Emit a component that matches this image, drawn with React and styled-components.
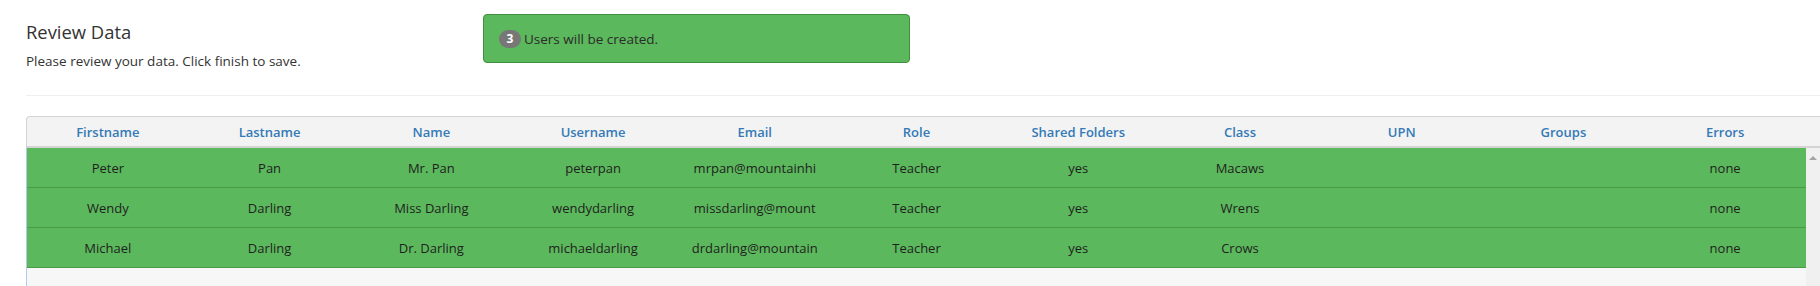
import React from "react";
import styled, { createGlobalStyle } from "styled-components";

const GlobalStyle = createGlobalStyle`
body{
  margin:0;
  background:#fff;
  font-family:"Open Sans", "Noto Sans", sans-serif;
  color:#333;
}
`

const Page = styled.div`
width:1820px;
height:286px;
overflow:hidden;
padding-left:26px;
box-sizing:border-box;
`

const TopSection = styled.div`
display:flex;
align-items:flex-start;
`

const Intro = styled.div`
width:457px;
padding-top:21px;
`

const Title = styled.h3`
margin:0;
font-size:18.4px;
line-height:22px;
font-weight:400;
color:#333;
`

const Subtitle = styled.p`
margin:9px 0 0;
font-size:13.5px;
line-height:18px;
color:#333;
`

const Alert = styled.div`
margin-top:14px;
width:427px;
height:49px;
box-sizing:border-box;
display:flex;
align-items:center;
gap:3px;
padding:0 15px;
background:#5cb85c;
border:1px solid #3f8f3f;
border-radius:4px;
font-size:13.5px;
color:#2b2b2b;
`

const Badge = styled.span`
display:inline-flex;
align-items:center;
justify-content:center;
min-width:22px;
height:18px;
border-radius:9px;
background:#777;
color:#fff;
font-size:12px;
font-weight:700;
`

const Divider = styled.hr`
margin:25px 0 20px;
border:0;
border-top:1px solid #eee;
`

const Grid = styled.div`
display:flex;
flex-direction:column;
`

const HeaderRow = styled.div`
display:grid;
grid-template-columns:repeat(11, 1fr) 14px;
height:32px;
box-sizing:border-box;
background:#f3f3f3;
border:1px solid #d4d4d4;
border-bottom:2px solid #d4d4d4;
border-right:0;
border-top-left-radius:4px;
`

const HeaderCell = styled.div`
display:flex;
align-items:center;
justify-content:center;
font-size:13px;
font-weight:600;
color:#337ab7;
`

const Viewport = styled.div`
display:flex;
height:150px;
`

const Body = styled.div`
flex:1;
background:#f7f7f7;
border-left:1px solid #b3cae6;
`

const Row = styled.div`
display:grid;
grid-template-columns:repeat(11, 1fr);
height:40px;
box-sizing:border-box;
background:#5cb85c;
border-bottom:1px solid #4a9a4a;
`

const Cell = styled.div`
display:flex;
align-items:center;
justify-content:center;
overflow:hidden;
white-space:nowrap;
font-size:13px;
color:#1f1f1f;
`

const Scrollbar = styled.div`
width:14px;
background:#f0f0f0;
display:flex;
justify-content:center;
padding-top:8px;
box-sizing:border-box;
`

const ArrowUp = styled.div`
width:0;
height:0;
border-left:4px solid transparent;
border-right:4px solid transparent;
border-bottom:4px solid #a3a3a3;
`

const columns = ["Firstname","Lastname","Name","Username","Email","Role","Shared Folders","Class","UPN","Groups","Errors"]

const users = [
  ["Peter","Pan","Mr. Pan","peterpan","mrpan@mountainhi","Teacher","yes","Macaws","","","none"],
  ["Wendy","Darling","Miss Darling","wendydarling","missdarling@mount","Teacher","yes","Wrens","","","none"],
  ["Michael","Darling","Dr. Darling","michaeldarling","drdarling@mountain","Teacher","yes","Crows","","","none"],
]

function App() {
  return (
  <>
  <GlobalStyle/>
  <Page>
    <TopSection>
      <Intro>
        <Title>Review Data</Title>
        <Subtitle>Please review your data. Click finish to save.</Subtitle>
      </Intro>
      <Alert>
        <Badge>{users.length}</Badge>
        <span>Users will be created.</span>
      </Alert>
    </TopSection>
    <Divider/>
    <Grid>
      <HeaderRow>
        {columns.map(c => <HeaderCell key={c}>{c}</HeaderCell>)}
        <div/>
      </HeaderRow>
      <Viewport>
        <Body>
          {users.map(u => (
            <Row key={u[3]}>
              {u.map((v, i) => <Cell key={i}>{v}</Cell>)}
            </Row>
          ))}
        </Body>
        <Scrollbar><ArrowUp/></Scrollbar>
      </Viewport>
    </Grid>
  </Page>
  </>
  );
}

export default App;
